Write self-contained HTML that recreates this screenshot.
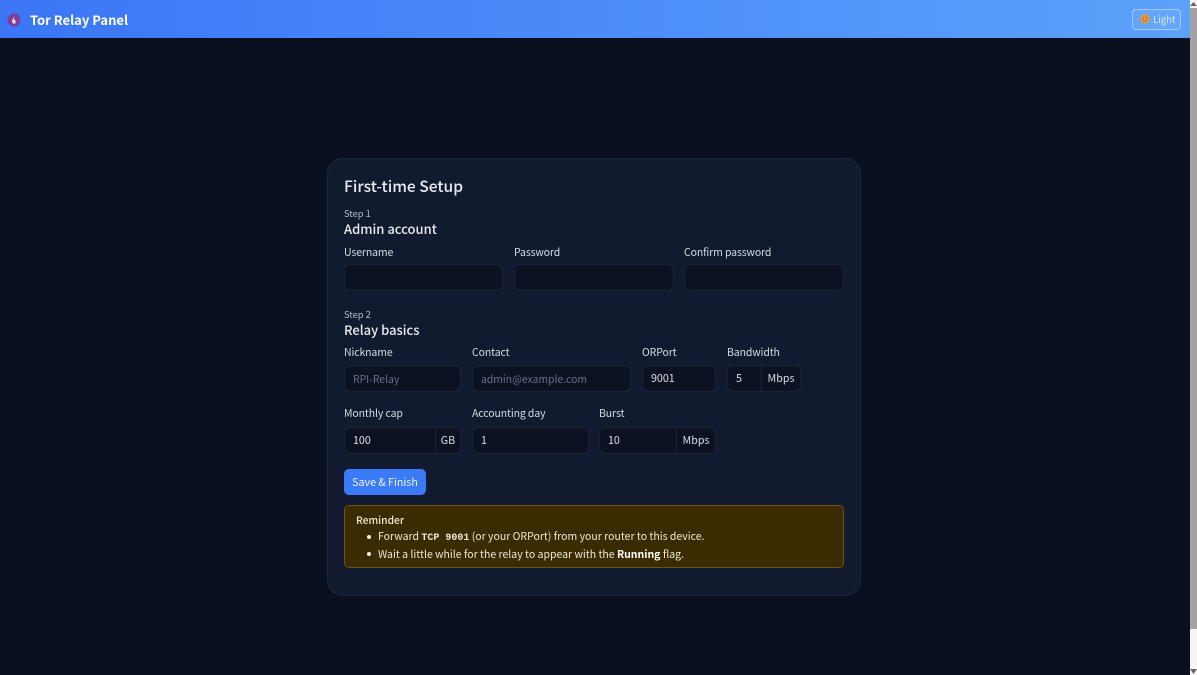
<!DOCTYPE html>
<html><head><meta charset="utf-8"><style>
*{box-sizing:border-box}
html,body{margin:0;padding:0;width:1197px;height:675px;overflow:hidden;background:#0b1021;font-family:"Noto Sans CJK SC","Liberation Sans",sans-serif;color:#e5e7eb}
.a{position:absolute;white-space:nowrap}
#nav{left:0;top:0;width:1190px;height:38px;background:linear-gradient(90deg,#3b76f6,#5ca2fb)}
#card{left:327px;top:158px;width:534px;height:438px;background:#111a2e;border:1px solid #1b2640;border-radius:16px}
.l{font-size:10.5px;letter-spacing:-.12px;color:#d5dce6;line-height:16px;height:16px}
.s{font-size:9.3px;color:#b4bdcc;line-height:14px}
.h{font-size:13px;font-weight:500;color:#e8ebf0;line-height:18px}
.i{height:27px;background:#0c1222;border:1px solid #19233a;border-radius:6px;font-size:10.7px;line-height:25px;padding-left:8px;color:#dde2ea}
.p{color:#667285;font-size:10.4px}
.u{top:0;bottom:0;right:0;border-left:1px solid #19233a;text-align:center;position:absolute;padding:0;color:#d5dce6}
.m{font-size:10.5px;line-height:15px;color:#ece8dc}
</style></head><body>
<div class="a" id="nav"></div>
<svg class="a" style="left:7px;top:13px" width="14" height="14" viewBox="0 0 15 15"><circle cx="7.500" cy="7.500" r="7" fill="#7d3f98"/><path d="M8.500 2.500 6.500 6C5 7.500 5 11.500 7.500 11.500S10 8 8 7.500L7.500 5.500Z" fill="#e8d9ee"/></svg>
<div class="a" style="left:30px;top:11px;font-size:13px;line-height:17px;font-weight:700;color:#fff">Tor Relay Panel</div>
<div class="a" style="left:1132px;top:9px;width:49px;height:21px;border:1px solid rgba(255,255,255,.4);border-radius:4px;background:rgba(255,255,255,.06)"></div>
<svg class="a" style="left:1140px;top:14px" width="10" height="10" viewBox="0 0 10 10"><circle cx="5" cy="5" r="4.700" fill="#e8973a"/><circle cx="3.400" cy="4" r=".7" fill="#8a5a1c"/><circle cx="6.600" cy="4" r=".7" fill="#8a5a1c"/><path d="M3 6.500Q5 8 7 6.500" stroke="#8a5a1c" stroke-width=".7" fill="none"/></svg>
<div class="a" style="left:1153px;top:12px;font-size:9.5px;line-height:14px;color:#dbeafe">Light</div>
<div class="a" id="card"></div>
<div class="a" style="left:344px;top:176px;font-size:15.6px;line-height:21px;font-weight:500;color:#e8ebf0">First-time Setup</div>
<div class="a s" style="left:344px;top:206px">Step 1</div>
<div class="a h" style="left:344px;top:220px">Admin account</div>
<div class="a l" style="left:344px;top:245px">Username</div>
<div class="a l" style="left:514px;top:245px">Password</div>
<div class="a l" style="left:684px;top:245px">Confirm password</div>
<div class="a i" style="left:344px;top:264px;width:159px"></div>
<div class="a i" style="left:514px;top:264px;width:160px"></div>
<div class="a i" style="left:684px;top:264px;width:160px"></div>
<div class="a s" style="left:344px;top:307px">Step 2</div>
<div class="a h" style="left:344px;top:321px">Relay basics</div>
<div class="a l" style="left:344px;top:345px">Nickname</div>
<div class="a l" style="left:472px;top:345px">Contact</div>
<div class="a l" style="left:642px;top:345px">ORPort</div>
<div class="a l" style="left:727px;top:345px">Bandwidth</div>
<div class="a i p" style="left:344px;top:365px;width:117px">RPI-Relay</div>
<div class="a i p" style="left:472px;top:365px;width:159px">admin@example.com</div>
<div class="a i" style="left:642px;top:365px;width:74px">9001</div>
<div class="a i" style="left:727px;top:365px;width:74px">5<span class="u" style="width:39px">Mbps</span></div>
<div class="a l" style="left:344px;top:406px">Monthly cap</div>
<div class="a l" style="left:472px;top:406px">Accounting day</div>
<div class="a l" style="left:599px;top:406px">Burst</div>
<div class="a i" style="left:344px;top:427px;width:117px">100<span class="u" style="width:25px">GB</span></div>
<div class="a i" style="left:472px;top:427px;width:117px">1</div>
<div class="a i" style="left:599px;top:427px;width:117px">10<span class="u" style="width:39px">Mbps</span></div>
<div class="a" style="left:344px;top:469px;width:82px;height:26px;background:#3b7bf8;border-radius:5px;color:#f1f5ff;font-size:10.7px;line-height:27px;text-align:center">Save &amp; Finish</div>
<div class="a" style="left:344px;top:505px;width:500px;height:63px;background:#3b2b00;border:1px solid #6b5414;border-radius:5px"></div>
<div class="a" style="left:356px;top:513px;font-size:10.3px;line-height:14px;font-weight:500;color:#f0e9d8">Reminder</div>
<div class="a" style="left:367px;top:535px;width:4px;height:4px;border-radius:50%;background:#eee"></div>
<div class="a m" style="left:378px;top:529px">Forward <b style="font:700 10px 'Liberation Mono',monospace">TCP 9001</b> (or your ORPort) from your router to this device.</div>
<div class="a" style="left:367px;top:552px;width:4px;height:4px;border-radius:50%;background:#eee"></div>
<div class="a m" style="left:378px;top:547px">Wait a little while for the relay to appear with the <b style="color:#fff">Running</b> flag.</div>
<div class="a" style="left:1190px;top:0;width:7px;height:675px;background:#f5f5f5"></div>
<div class="a" style="left:1190px;top:8px;width:7px;height:621px;background:#a3a3a3"></div>
<svg class="a" style="left:1190px;top:0" width="7" height="675"><path d="M0 6 3.500 2 7 6Z" fill="#666"/><path d="M0 669 3.500 674 7 669Z" fill="#666"/></svg>
</body></html>
